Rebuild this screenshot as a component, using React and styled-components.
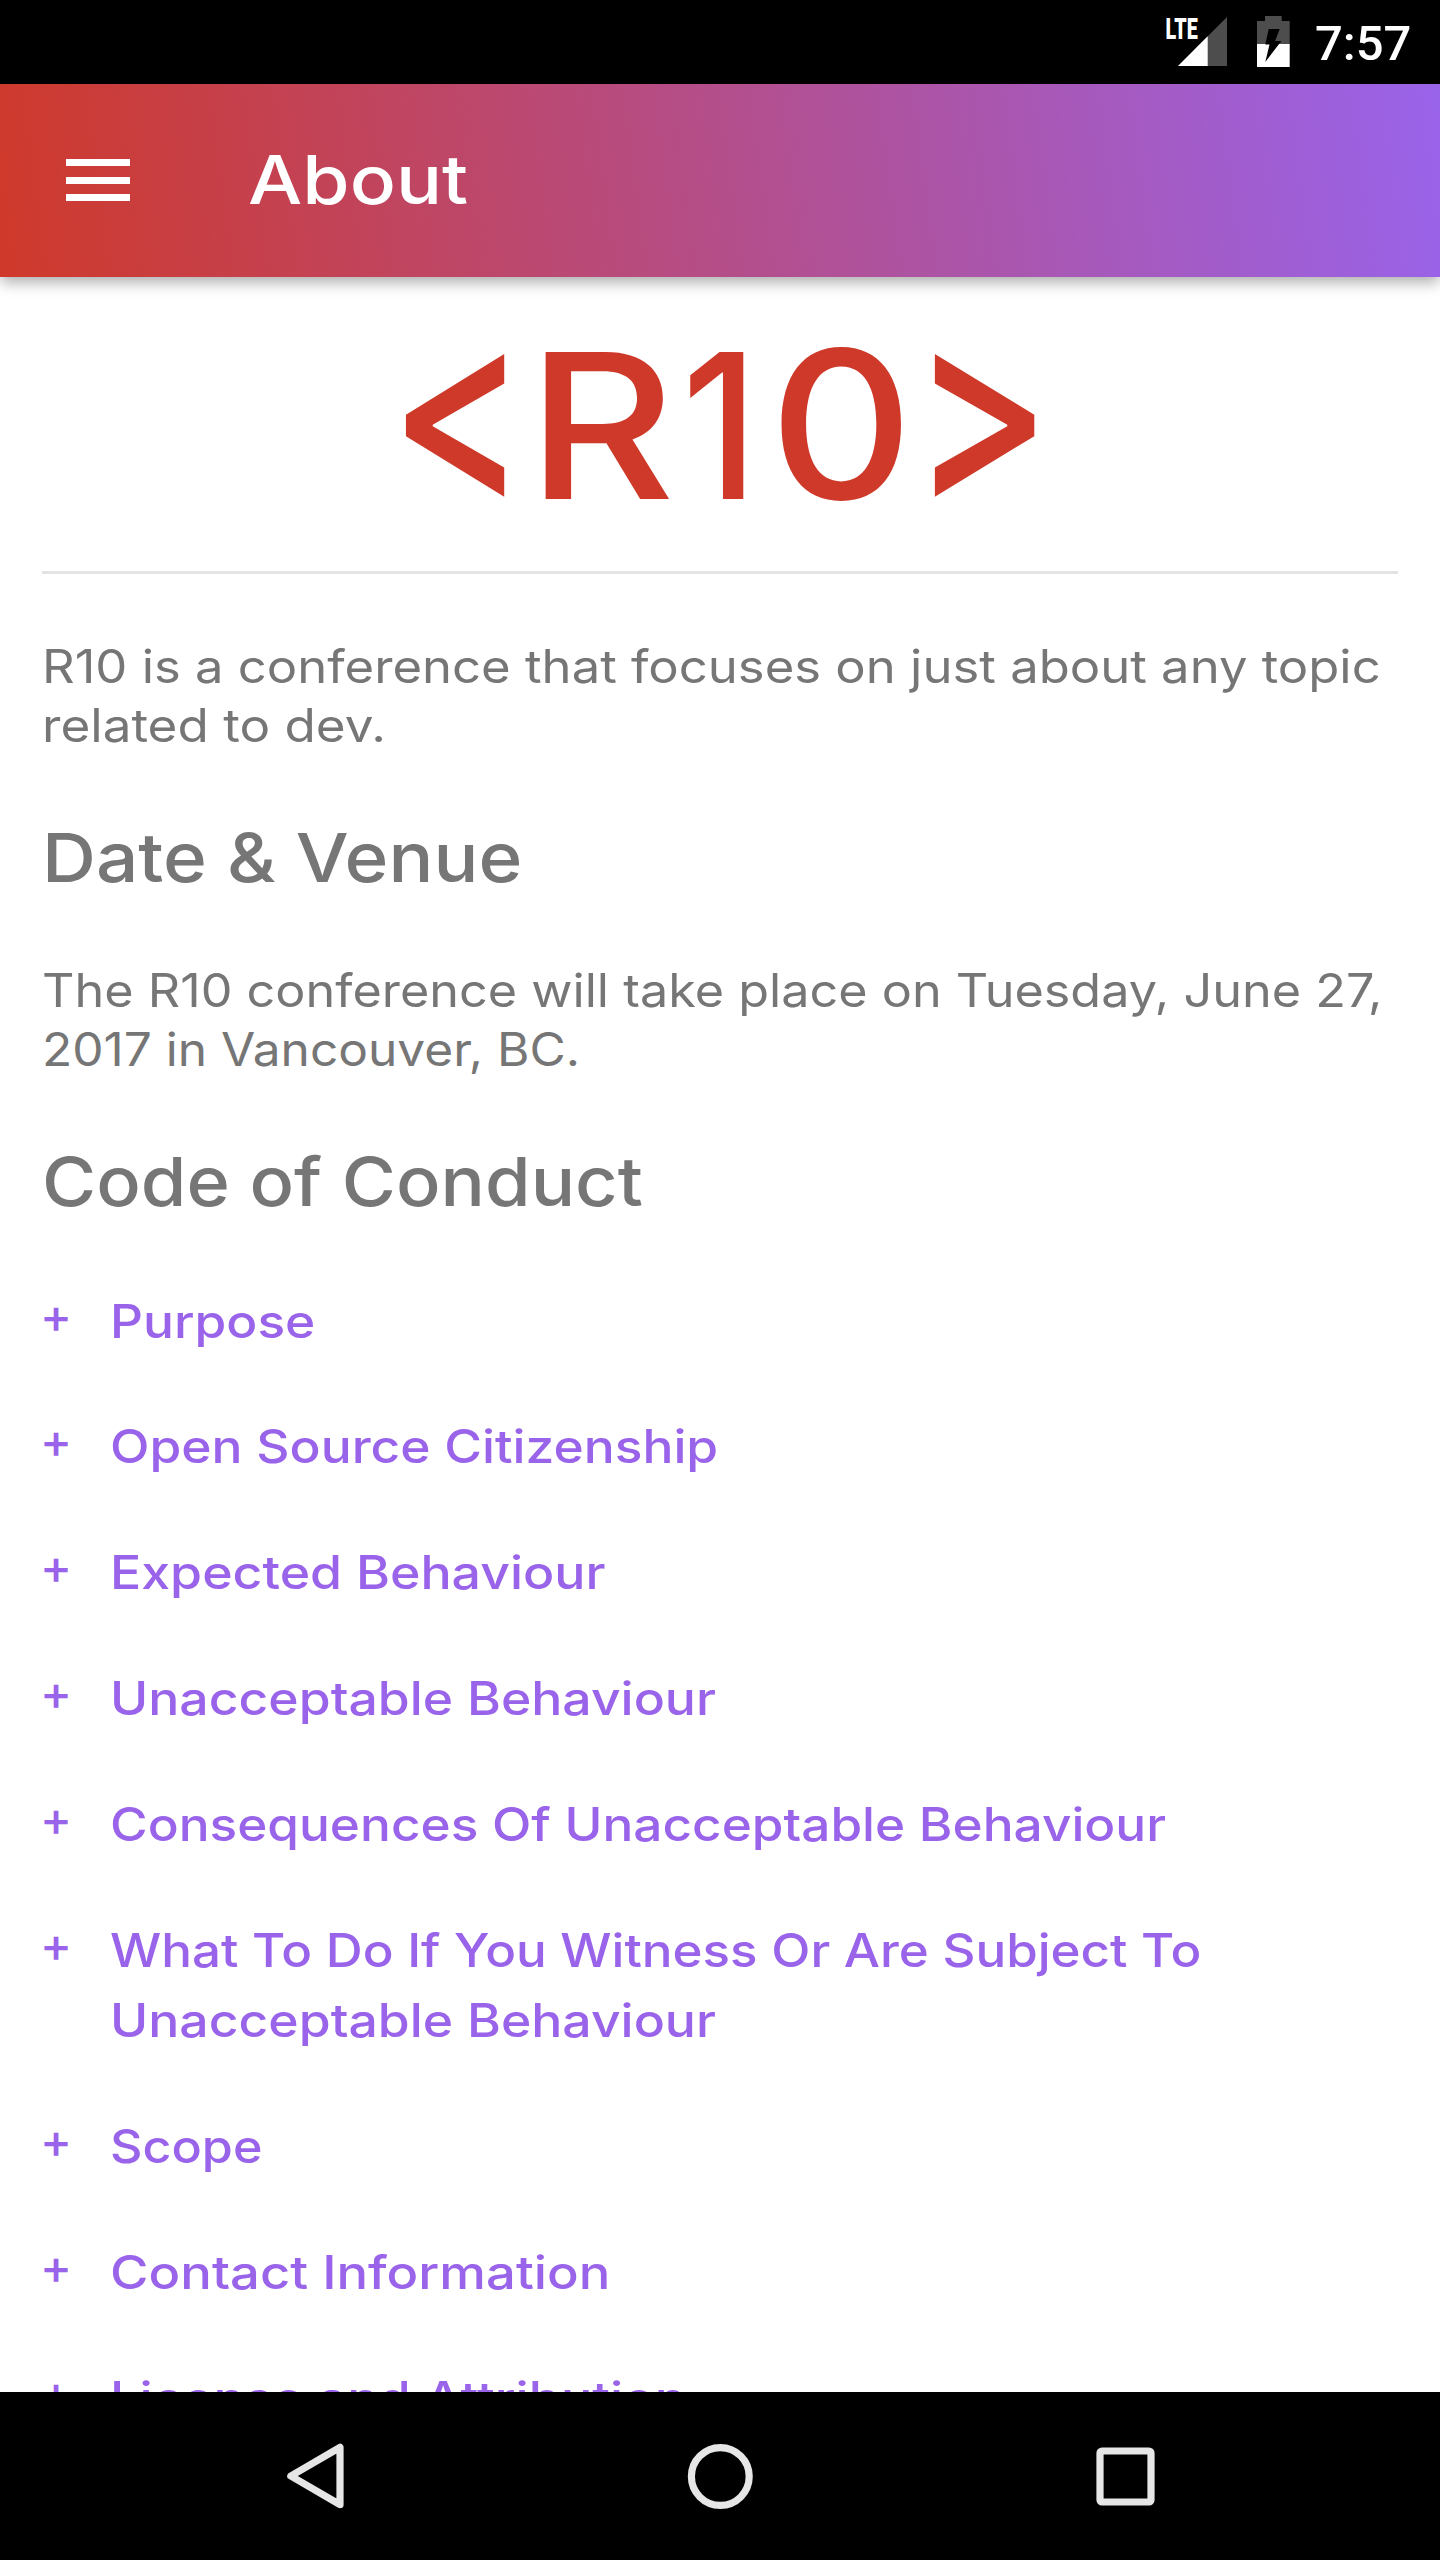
import React from "react";
import styled, { createGlobalStyle } from "styled-components";

const color = {
  red: "#cf392a",
  purple: "#9963ea",
  text: "#767676",
  line: "#e4e4e4",
  nav: "#e6e6e6",
};

const GlobalStyle = createGlobalStyle`
  *, *::before, *::after { box-sizing: border-box; }
  body { margin: 0; background: #fff; }
`;

const Screen = styled.div`
  display: flex;
  flex-direction: column;
  width: 1440px;
  height: 2560px;
  overflow: hidden;
  background: #fff;
  font-family: Inter, "Open Sans", sans-serif;
`;

/* ---------- status bar ---------- */

const StatusBar = styled.div`
  flex: none;
  display: flex;
  justify-content: flex-end;
  align-items: flex-start;
  height: 84px;
  padding-right: 28px;
  background: #000;
`;

const StatusIcons = styled.svg`
  display: block;
  width: 155px;
  height: 84px;
`;

const Clock = styled.time`
  width: 97px;
  font: 500 49px/88px Roboto, sans-serif;
  color: #fff;
  white-space: nowrap;
`;

/* ---------- app bar ---------- */

const AppBar = styled.header`
  position: relative;
  z-index: 1;
  flex: none;
  display: flex;
  align-items: center;
  height: 193px;
  padding: 0 0 1px 66px;
  background: linear-gradient(82.37deg, ${color.red}, ${color.purple});
  box-shadow: 0 6px 14px -1px rgba(0, 0, 0, 0.34);
`;

const MenuButton = styled.button`
  display: flex;
  flex-direction: column;
  justify-content: space-between;
  width: 64px;
  height: 42px;
  margin: 0 118px 0 0;
  padding: 0;
  border: 0;
  background: none;
`;

const MenuBar = styled.span`
  height: 7px;
  background: #fff;
`;

/* The typeface is set wide: each line is stretched from its left edge. */
const Line = styled.span`
  display: block;
  width: fit-content;
  white-space: nowrap;
  transform: scaleX(${(p) => p.$stretch});
  transform-origin: 0 50%;
`;

const Title = styled.h1`
  margin: 0;
  padding-bottom: 1px;
  font-size: 67.5px;
  line-height: 84px;
  font-weight: 500;
  color: #fff;
`;

/* ---------- page ---------- */

const Content = styled.main`
  flex: 1;
  min-height: 0;
  overflow: hidden;
  padding: 68px 42px 0;
`;

const LogoArea = styled.div`
  display: flex;
  justify-content: center;
  padding-bottom: 66px;
  border-bottom: 3px solid ${color.line};
`;

const LogoMark = styled.svg`
  display: block;
  width: 630px;
  height: 160px;
  overflow: visible;
  font: 500 200px Inter, sans-serif;
  fill: ${color.red};
`;

const Paragraph = styled.p`
  margin: ${(p) => p.$top || 61}px 0 60px;
  font-size: 46.2px;
  line-height: 59px;
  font-weight: 400;
  color: ${color.text};
`;

const Heading = styled.h2`
  margin: 0;
  font-size: 68px;
  line-height: 85px;
  font-weight: 500;
  color: ${color.text};
`;

const TopicList = styled.ul`
  display: flex;
  flex-direction: column;
  gap: 55.9px;
  margin: 61.6px 0 0;
  padding: 0;
  list-style: none;
`;

const Topic = styled.li`
  display: flex;
  align-items: flex-start;
  font-weight: 500;
  color: ${color.purple};
`;

const Plus = styled.span`
  width: 70px;
  margin-left: -2px;
  font-size: 48px;
  line-height: 59px;
`;

const TopicName = styled.div`
  font-size: 46.2px;
  line-height: 70px;
`;

/* ---------- navigation bar ---------- */

const NavBar = styled.nav`
  flex: none;
  display: flex;
  justify-content: center;
  height: 168px;
  background: #000;
`;

const NavButton = styled.button`
  display: flex;
  align-items: center;
  justify-content: center;
  width: 405px;
  padding: 0;
  border: 0;
  background: none;
`;

const NavIcon = styled.svg`
  width: 80px;
  height: 80px;
  fill: none;
  stroke: ${color.nav};
  stroke-width: 7.2;
  stroke-linejoin: round;
`;

const topics = [
  [["Purpose", 1.114]],
  [["Open Source Citizenship", 1.115]],
  [["Expected Behaviour", 1.122]],
  [["Unacceptable Behaviour", 1.119]],
  [["Consequences Of Unacceptable Behaviour", 1.111]],
  [
    ["What To Do If You Witness Or Are Subject To", 1.106],
    ["Unacceptable Behaviour", 1.119],
  ],
  [["Scope", 1.088]],
  [["Contact Information", 1.138]],
  [["License and Attribution", 1.13]],
];

const Lines = ({ of }) =>
  of.map(([text, stretch]) => (
    <Line key={text} $stretch={stretch}>
      {text}
    </Line>
  ));

function Logo() {
  return (
    <LogoMark viewBox="405 345 630 160">
      <text transform="matrix(1.0385 0 0 1.324 388.6 501.3)">&lt;</text>
      <text transform="matrix(1.143 0 0 1.0115 527.3 499)">R</text>
      <text transform="matrix(0.92 0 0 1.0115 681.7 499)">1</text>
      <text transform="matrix(1.116 0 0 1.03 769.2 499)">0</text>
      <text transform="matrix(1.0505 0 0 1.324 911.7 501.3)">&gt;</text>
    </LogoMark>
  );
}

function SignalAndBattery() {
  return (
    <StatusIcons viewBox="1160 0 155 84">
      <text
        transform="translate(1165.6 39) scale(0.68 1)"
        fontFamily="Roboto, sans-serif"
        fontWeight="900"
        fontSize="29"
        fill="#fff"
      >
        LTE
      </text>
      <path d="M1227 17V66H1178z" fill="#4d4d4d" />
      <path d="M1207.7 36.3V66H1178z" fill="#fff" />
      <path d="M1265 16h16.7v5h8v23H1257V21h8z" fill="#4d4d4d" />
      <path d="M1257 44h32.7v23H1257z" fill="#fff" />
      <path d="M1268.7 29h11l-4.6 12h6.3l-16.1 21 4.2-17.5h-4.2z" fill="#000" />
    </StatusIcons>
  );
}

export default function App() {
  return (
    <>
      <GlobalStyle />
      <Screen>
        <StatusBar>
          <SignalAndBattery />
          <Clock>7:57</Clock>
        </StatusBar>
        <AppBar>
          <MenuButton aria-label="Menu">
            <MenuBar />
            <MenuBar />
            <MenuBar />
          </MenuButton>
          <Title>
            <Line $stretch={1.135}>About</Line>
          </Title>
        </AppBar>
        <Content>
          <LogoArea>
            <Logo />
          </LogoArea>
          <Paragraph $top={63}>
            <Lines
              of={[
                ["R10 is a conference that focuses on just about any topic", 1.0995],
                ["related to dev.", 1.108],
              ]}
            />
          </Paragraph>
          <Heading>
            <Line $stretch={1.099}>Date &amp; Venue</Line>
          </Heading>
          <Paragraph>
            <Lines
              of={[
                ["The R10 conference will take place on Tuesday, June 27,", 1.09],
                ["2017 in Vancouver, BC.", 1.074],
              ]}
            />
          </Paragraph>
          <Heading>
            <Line $stretch={1.086}>Code of Conduct</Line>
          </Heading>
          <TopicList>
            {topics.map((lines) => (
              <Topic key={lines[0][0]}>
                <Plus>+</Plus>
                <TopicName>
                  <Lines of={lines} />
                </TopicName>
              </Topic>
            ))}
          </TopicList>
        </Content>
        <NavBar>
          <NavButton aria-label="Back">
            <NavIcon viewBox="275 2436.5 80 80">
              <path d="M290.8 2476.5 340 2447.8V2505.2z" />
            </NavIcon>
          </NavButton>
          <NavButton aria-label="Home">
            <NavIcon viewBox="0 0 80 80">
              <circle cx="40.3" cy="40.5" r="28.9" />
            </NavIcon>
          </NavButton>
          <NavButton aria-label="Overview">
            <NavIcon viewBox="0 0 80 80">
              <rect x="15" y="15" width="51" height="51" rx="2" />
            </NavIcon>
          </NavButton>
        </NavBar>
      </Screen>
    </>
  );
}
